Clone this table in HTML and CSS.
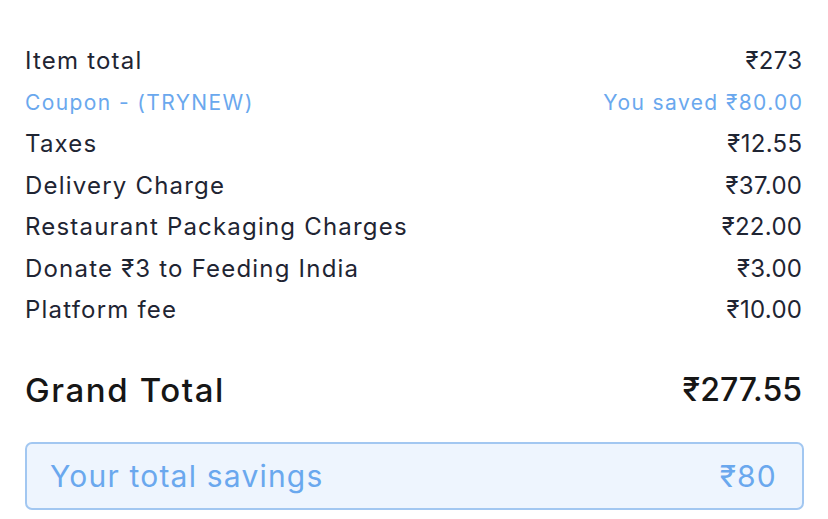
FILE: index.html
```html
<!DOCTYPE html>
<html lang="en">

<head>
  <meta charset="UTF-8">
  <meta name="viewport" content="width=device-width, initial-scale=1.0">
  <title>Bill Details</title>
  <link rel="stylesheet" href="styles.css">
</head>

<body>
  <div class="bill-wrapper">
    <div class="bill-rows">
      <div class="bill-row">
        <span>Item total</span>
        <span class="amount">₹273</span>
      </div>
      <div class="bill-row coupon">
        <span>Coupon - (TRYNEW)</span>
        <span>You saved ₹80.00</span>
      </div>
      <div class="bill-row">
        <span>Taxes</span>
        <span class="amount">₹12.55</span>
      </div>
      <div class="bill-row">
        <span>Delivery Charge</span>
        <span class="amount">₹37.00</span>
      </div>
      <div class="bill-row">
        <span>Restaurant Packaging Charges</span>
        <span class="amount">₹22.00</span>
      </div>
      <div class="bill-row">
        <span>Donate ₹3 to Feeding India</span>
        <span class="amount">₹3.00</span>
      </div>
      <div class="bill-row">
        <span>Platform fee</span>
        <span class="amount">₹10.00</span>
      </div>
    </div>

    <div class="grand-total">
      <span class="label">Grand Total</span>
      <span>₹277.55</span>
    </div>

    <div class="savings">
      <span>Your total savings</span>
      <span>₹80</span>
    </div>
  </div>
</body>

</html>
```

FILE: styles.css
```css
* {
  margin: 0;
  padding: 0;
  box-sizing: border-box;
  font-family: "Inter", "Noto Sans", sans-serif;
}

html,
body {
  width: 100%;
  height: 100%;
  background: #ffffff;
}

.bill-wrapper {
  padding: 40px 26px 0 25px;
}

.bill-row {
  display: flex;
  justify-content: space-between;
  align-items: center;
  height: 41.5px;
  font-size: 24px;
  letter-spacing: 1.2px;
  color: #1f2533;
}

.bill-row .amount {
  letter-spacing: 0.3px;
  margin-right: -0.3px;
}

.bill-row.coupon {
  font-size: 21px;
  letter-spacing: 1.4px;
  color: #6aa8ee;
}

.bill-row.coupon span:last-child {
  margin-right: -1.4px;
}

.grand-total {
  display: flex;
  justify-content: space-between;
  align-items: center;
  height: 50px;
  margin-top: 34px;
  font-size: 32px;
  font-weight: 500;
  color: #161616;
}

.grand-total .label {
  font-size: 33px;
  letter-spacing: 1.6px;
}

.savings {
  display: flex;
  justify-content: space-between;
  align-items: center;
  height: 68px;
  margin-top: 27px;
  margin-right: -2px;
  padding: 0 25px 0 23px;
  border: 2px solid #a2c7f1;
  border-radius: 7px;
  background: #eef5fe;
  color: #6aa8ee;
  font-size: 30px;
  letter-spacing: 1.2px;
}
```
